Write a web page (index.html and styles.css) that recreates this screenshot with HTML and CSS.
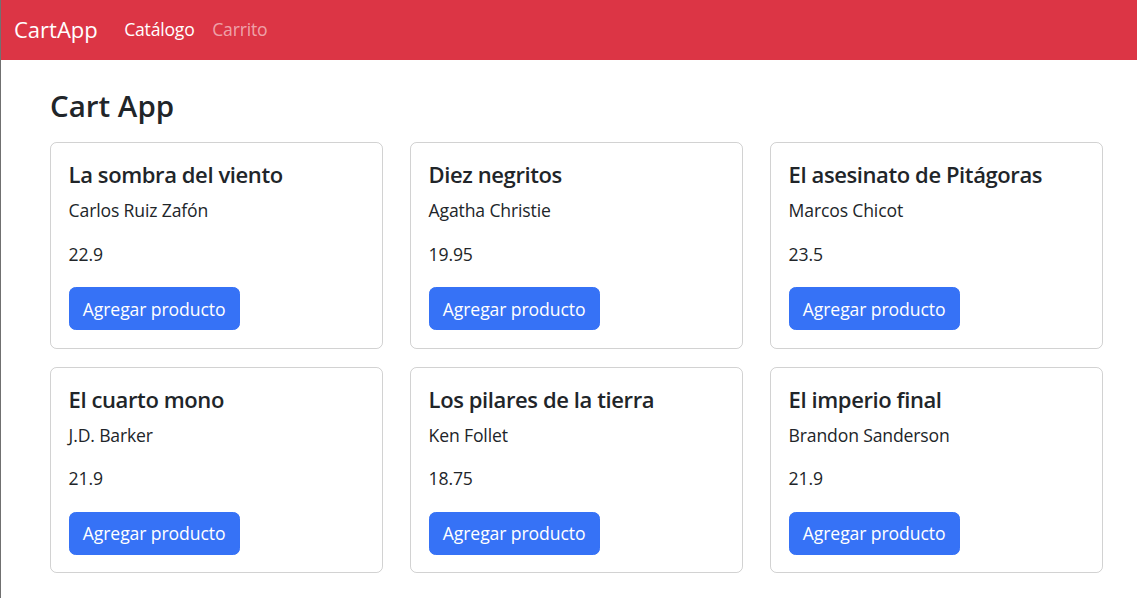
FILE: index.html
```html
<!DOCTYPE html>
<html lang="es">
<head>
<meta charset="utf-8">
<title>CartApp</title>
<link rel="stylesheet" href="styles.css">
</head>
<body>
<nav class="navbar">
  <a class="brand" href="#">CartApp</a>
  <ul class="nav">
    <li><a class="nav-link active" href="#">Catálogo</a></li>
    <li><a class="nav-link" href="#">Carrito</a></li>
  </ul>
</nav>
<main class="page">
  <h3 class="page-title">Cart App</h3>
  <div class="grid">
    <div class="card">
      <h5 class="card-title">La sombra del viento</h5>
      <p class="card-text">Carlos Ruiz Zafón</p>
      <p class="card-text price">22.9</p>
      <button class="btn">Agregar producto</button>
    </div>
    <div class="card">
      <h5 class="card-title">Diez negritos</h5>
      <p class="card-text">Agatha Christie</p>
      <p class="card-text price">19.95</p>
      <button class="btn">Agregar producto</button>
    </div>
    <div class="card">
      <h5 class="card-title">El asesinato de Pitágoras</h5>
      <p class="card-text">Marcos Chicot</p>
      <p class="card-text price">23.5</p>
      <button class="btn">Agregar producto</button>
    </div>
    <div class="card">
      <h5 class="card-title">El cuarto mono</h5>
      <p class="card-text">J.D. Barker</p>
      <p class="card-text price">21.9</p>
      <button class="btn">Agregar producto</button>
    </div>
    <div class="card">
      <h5 class="card-title">Los pilares de la tierra</h5>
      <p class="card-text">Ken Follet</p>
      <p class="card-text price">18.75</p>
      <button class="btn">Agregar producto</button>
    </div>
    <div class="card">
      <h5 class="card-title">El imperio final</h5>
      <p class="card-text">Brandon Sanderson</p>
      <p class="card-text price">21.9</p>
      <button class="btn">Agregar producto</button>
    </div>
  </div>
</main>
</body>
</html>
```
FILE: styles.css
```css
* { box-sizing: border-box; }
html, body { margin: 0; padding: 0; }
body {
  font-family: "Open Sans", "Noto Sans", sans-serif;
  font-size: 17.6px;
  line-height: 1.5;
  color: #212529;
  background: #fff;
  border-left: 1px solid #707070;
  min-height: 598px;
}
.navbar {
  display: flex;
  align-items: center;
  height: 60px;
  padding: 0 13px 1px;
  background: #dc3545;
}
.brand {
  color: #fff;
  text-decoration: none;
  font-size: 22px;
  margin-right: 17.6px;
}
.nav {
  display: flex;
  list-style: none;
  margin: 0;
  padding: 0;
}
.nav-link {
  display: block;
  padding: 0 8.8px;
  color: rgba(255,255,255,0.55);
  text-decoration: none;
  font-size: 17.6px;
  letter-spacing: -0.2px;
}
.nav-link.active { color: #fff; }
.page {
  padding: 0 34px 0 49px;
}
.page-title {
  margin: 28px 0 19px;
  font-size: 29.5px;
  font-weight: 600;
  line-height: 1.2;
}
.grid {
  display: grid;
  grid-template-columns: repeat(3, 1fr);
  column-gap: 27px;
  row-gap: 18px;
}
.card {
  border: 1px solid rgba(0,0,0,0.175);
  border-radius: 6.6px;
  padding: 17.6px;
}
.card-title {
  margin: 0 0 9.6px;
  font-size: 22px;
  font-weight: 600;
  line-height: 1.2;
  letter-spacing: -0.4px;
}
.card-text {
  margin: 0 0 17.6px;
  letter-spacing: -0.15px;
}
.card-text.price {
  margin-bottom: 20px;
}
.btn {
  display: block;
  font-family: inherit;
  font-size: 17.6px;
  line-height: 1.5;
  color: #fff;
  background: #3672f6;
  border: 1px solid #3672f6;
  border-radius: 6.6px;
  padding: 7.3px 13.2px;
  letter-spacing: -0.1px;
  cursor: pointer;
}
```
